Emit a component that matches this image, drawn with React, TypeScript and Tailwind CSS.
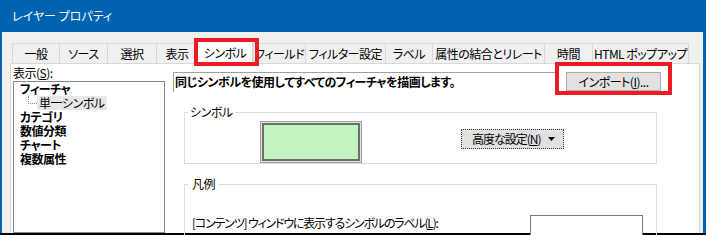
import React from 'react';

const tabs: { label: string; width: string; selected?: boolean }[] = [
  { label: '一般', width: 'w-[47px]' },
  { label: 'ソース', width: 'w-[48px]' },
  { label: '選択', width: 'w-[49px]' },
  { label: '表示', width: 'w-[41px]' },
  { label: 'シンボル', width: 'w-[56px]', selected: true },
  { label: 'フィールド', width: 'w-[52px]' },
  { label: 'フィルター設定', width: 'w-[80px]' },
  { label: 'ラベル', width: 'w-[47px]' },
  { label: '属性の結合とリレート', width: 'w-[112px]' },
  { label: '時間', width: 'w-[48px]' },
  { label: 'HTML ポップアップ', width: 'w-[97px]' },
];

const treeRoots = ['カテゴリ', '数値分類', 'チャート', '複数属性'];

function Mnemonic({ text, letter, after = '' }: { text: string; letter: string; after?: string }) {
  return (
    <span className="whitespace-nowrap">
      {text}(<span className="underline underline-offset-1">{letter}</span>){after}
    </span>
  );
}

export default function App() {
  return (
    <div className="w-[706px] h-[235px] overflow-hidden bg-[#0063b1] flex flex-col text-[12px] tracking-[-0.5px] whitespace-nowrap text-black font-['Noto_Sans_CJK_JP',sans-serif] [font-feature-settings:'palt']">
      {/* Title bar */}
      <div className="h-[32px] shrink-0 flex items-center pl-[12px] text-white tracking-normal">レイヤー プロパティ</div>

      {/* Body */}
      <div className="flex-1 min-h-0 ml-[2px] mr-[3px] bg-[#f0f0f0] flex flex-col">
        {/* Tab strip */}
        <div className="relative h-[31px] shrink-0 flex items-end pl-[10px]">
          {tabs.map((t, i) =>
            t.selected ? (
              <div
                key={t.label}
                className={`${t.width} shrink-0 h-[24px] -mb-px z-10 bg-white border-t border-l border-r border-[#d9d9d9] flex items-center justify-center leading-none`}
              >
                {t.label}
              </div>
            ) : (
              <div
                key={t.label}
                className={`${t.width} shrink-0 h-[20px] bg-[#f0f0f0] border-t border-l border-[#d9d9d9] flex items-center justify-center leading-none ${
                  i === tabs.length - 1 ? 'border-r' : ''
                }`}
              >
                {t.label}
              </div>
            )
          )}
          {/* red highlight around the selected tab */}
          <div className="absolute left-[192px] top-[6px] w-[65px] h-[28px] border-4 border-[#ec1c24] z-20" />
        </div>

        {/* Tab panel */}
        <div className="flex-1 min-h-0 ml-[8px] w-[690px] bg-white border border-b-0 border-[#d9d9d9] flex">
          {/* Left column */}
          <div className="pl-[2px] w-[154px] shrink-0 flex flex-col">
            <div className="h-[17px] pt-[1px] leading-[15px]">
              <Mnemonic text="表示" letter="S" after=":" />
            </div>
            <div className="flex-1 border border-[#828790] bg-white leading-[14px]">
              <div className="h-[14px] pl-[6px] font-bold">フィーチャ</div>
              <div className="h-[14px] pl-[14px] flex items-start">
                <div className="w-[9px] h-[8px] border-l border-b border-dotted border-[#8a8a8a]" />
                <span className="bg-[#e8e8e8] px-[2px]">単一シンボル</span>
              </div>
              {treeRoots.map((r) => (
                <div key={r} className="h-[14px] pl-[6px] font-bold">
                  {r}
                </div>
              ))}
            </div>
          </div>

          {/* Right column */}
          <div className="ml-[8px] flex-1 flex flex-col">
            <div className="relative mt-[8px] flex items-start">
              <div className="w-[382px] h-[20px] border-t border-l border-[#a0a0a0] pl-[1px] leading-[18px] font-bold">
                同じシンボルを使用してすべてのフィーチャを描画します。
              </div>
              <button className="ml-[11px] w-[95px] h-[19px] bg-[#e1e1e1] border border-[#adadad] flex items-center justify-center leading-none">
                <span>
                  インポート(<span className="underline underline-offset-1">I</span>)...
                </span>
              </button>
              {/* red highlight around the import button */}
              <div className="absolute left-[382px] top-[-10px] w-[117px] h-[33px] border-4 border-[#ec1c24]" />
            </div>

            {/* Symbol group */}
            <div className="relative mt-[20px] ml-[11px] w-[473px] h-[58px] border border-[#dcdcdc] flex items-start">
              <span className="absolute left-[3px] top-[-8px] bg-white px-[2px] leading-[14px]">シンボル</span>
              <div className="ml-[75px] mt-[8px] w-[102px] h-[42px] shrink-0 border border-[#a0a0a0] bg-[#e3e3e3] p-[1px] flex">
                <div className="flex-1 border-2 border-[#6d6d6d] bg-[#c1f4c0]" />
              </div>
              <button className="ml-[99px] mt-[16px] w-[103px] h-[20px] shrink-0 bg-[#e1e1e1] border border-dotted border-[#333] flex items-center justify-between pl-[10px] pr-[8px] leading-none tracking-[-1px]">
                <Mnemonic text="高度な設定" letter="N" />
                <svg width="7" height="4" viewBox="0 0 7 4" className="shrink-0">
                  <path d="M0 0h7L3.5 4z" fill="#000" />
                </svg>
              </button>
            </div>

            {/* Legend group */}
            <div className="relative mt-[20px] ml-[11px] w-[473px] h-[80px] border border-[#dcdcdc] flex items-start justify-between pr-[13px]">
              <span className="absolute left-[3px] top-[-8px] bg-white px-[4px] leading-[14px]">凡例</span>
              <div className="mt-[31px] pl-[7px] leading-[14px] tracking-[-1.2px]">
                <Mnemonic text="[コンテンツ] ウィンドウに表示するシンボルのラベル" letter="L" after=":" />
              </div>
              <div className="mt-[30px] w-[113px] h-[30px] shrink-0 border border-[#7a7a7a] bg-white" />
            </div>
          </div>
        </div>
      </div>

      <div className="h-[2px] shrink-0 bg-black" />
    </div>
  );
}
